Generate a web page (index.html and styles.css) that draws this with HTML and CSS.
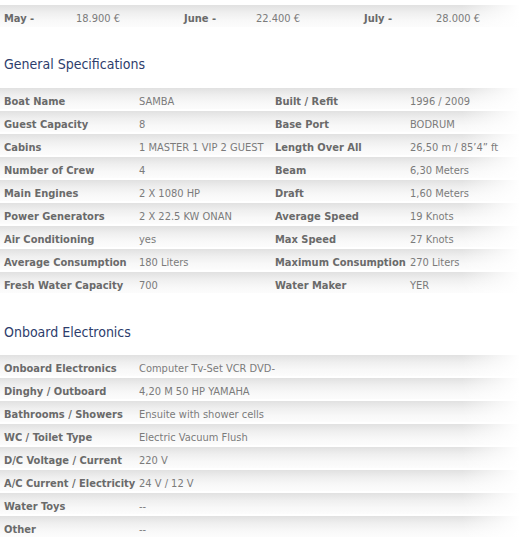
FILE: index.html
```html
<!DOCTYPE html>
<html>
<head>
<meta charset="utf-8">
<link rel="stylesheet" href="styles.css">
</head>
<body>
<div class="page">
  <div class="row prices">
    <div class="lbl">May -</div><div class="val">18.900 €</div>
    <div class="lbl">June -</div><div class="val">22.400 €</div>
    <div class="lbl">July -</div><div class="val">28.000 €</div>
  </div>

  <h2 class="heading">General Specifications</h2>
  <div class="specs">
    <div class="row quad"><div class="lbl">Boat Name</div><div class="val">SAMBA</div><div class="lbl">Built / Refit</div><div class="val">1996 / 2009</div></div>
    <div class="row quad"><div class="lbl">Guest Capacity</div><div class="val">8</div><div class="lbl">Base Port</div><div class="val">BODRUM</div></div>
    <div class="row quad"><div class="lbl">Cabins</div><div class="val">1 MASTER 1 VIP 2 GUEST</div><div class="lbl">Length Over All</div><div class="val">26,50 m / 85’4” ft</div></div>
    <div class="row quad"><div class="lbl">Number of Crew</div><div class="val">4</div><div class="lbl">Beam</div><div class="val">6,30 Meters</div></div>
    <div class="row quad"><div class="lbl">Main Engines</div><div class="val">2 X 1080 HP</div><div class="lbl">Draft</div><div class="val">1,60 Meters</div></div>
    <div class="row quad"><div class="lbl">Power Generators</div><div class="val">2 X 22.5 KW ONAN</div><div class="lbl">Average Speed</div><div class="val">19 Knots</div></div>
    <div class="row quad"><div class="lbl">Air Conditioning</div><div class="val">yes</div><div class="lbl">Max Speed</div><div class="val">27 Knots</div></div>
    <div class="row quad"><div class="lbl">Average Consumption</div><div class="val">180 Liters</div><div class="lbl">Maximum Consumption</div><div class="val">270 Liters</div></div>
    <div class="row quad"><div class="lbl">Fresh Water Capacity</div><div class="val">700</div><div class="lbl">Water Maker</div><div class="val">YER</div></div>
  </div>

  <h2 class="heading second">Onboard Electronics</h2>
  <div class="specs">
    <div class="row pair"><div class="lbl">Onboard Electronics</div><div class="val">Computer Tv-Set VCR DVD-</div></div>
    <div class="row pair"><div class="lbl">Dinghy / Outboard</div><div class="val">4,20 M 50 HP YAMAHA</div></div>
    <div class="row pair"><div class="lbl">Bathrooms / Showers</div><div class="val">Ensuite with shower cells</div></div>
    <div class="row pair"><div class="lbl">WC / Toilet Type</div><div class="val">Electric Vacuum Flush</div></div>
    <div class="row pair"><div class="lbl">D/C Voltage / Current</div><div class="val">220 V</div></div>
    <div class="row pair"><div class="lbl">A/C Current / Electricity</div><div class="val">24 V / 12 V</div></div>
    <div class="row pair"><div class="lbl">Water Toys</div><div class="val">--</div></div>
    <div class="row pair"><div class="lbl">Other</div><div class="val">--</div></div>
  </div>
</div>
</body>
</html>
```

FILE: styles.css
```css
html, body {
  margin: 0;
  padding: 0;
  background: #ffffff;
}

.page {
  width: 525px;
  font-family: "DejaVu Sans Condensed", "DejaVu Sans", sans-serif;
  font-size: 11px;
  color: #7b7b7b;
}

.row {
  display: grid;
  height: 23px;
  box-sizing: border-box;
  padding-top: 7px;
  line-height: 14px;
  border-bottom: 2px solid #ffffff;
  background:
    linear-gradient(to right, rgba(255,255,255,0) 0%, rgba(255,255,255,0) 88%, #ffffff 99%),
    linear-gradient(to bottom, #e1e1e1 0%, #efefef 35%, #f8f8f8 70%, #fcfcfc 100%);
}

.lbl {
  font-weight: bold;
  color: #6a6a6a;
  padding-left: 4px;
  white-space: nowrap;
}

.val {
  padding-left: 4px;
  white-space: nowrap;
}

.prices {
  margin-top: 5px;
  height: 22px;
  grid-template-columns: 72px 108px 72px 108px 72px 1fr;
  border-bottom: none;
}

.quad {
  grid-template-columns: 135px 136px 135px 1fr;
}

.pair {
  grid-template-columns: 135px 1fr;
}

.heading {
  margin: 29px 0 15px 0;
  padding-left: 4px;
  font-size: 14px;
  line-height: 17px;
  font-weight: normal;
  color: #2d3d6c;
}

.heading.second {
  margin-bottom: 14px;
}
```
